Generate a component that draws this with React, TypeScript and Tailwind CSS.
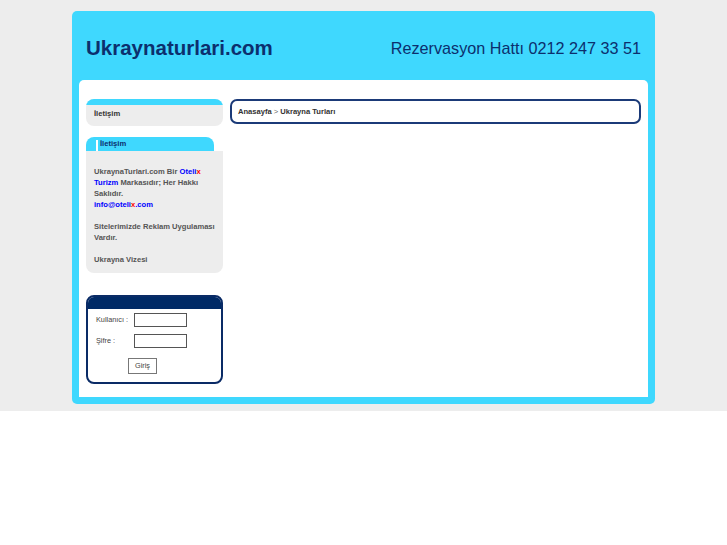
import React from "react";

const F = { fontFamily: '"Liberation Sans", Arial, sans-serif' };

export default function App() {
  return (
    <div style={F} className="w-full bg-white">
      <div className="bg-[#ededed] pt-[11px] pb-[7px]">
        <div className="mx-auto w-[583px] rounded-[5px] bg-[#3fd8fe] px-[7px] pb-[7px]">
          <div className="flex h-[69px] items-center justify-between pl-[7px] pr-[7px] pt-[6px]">
            <div className="text-[20.5px] font-bold leading-none text-[#0c2f6d]">Ukraynaturlari.com</div>
            <div className="text-[16.2px] leading-none text-[#0c2f6d]">Rezervasyon Hattı 0212 247 33 51</div>
          </div>
          <div className="flex h-[317px] gap-[7px] rounded-t-[5px] bg-white px-[7px] pt-[19px]">
            <div className="flex w-[137px] shrink-0 flex-col">
              {/* box 1 */}
              <div className="overflow-hidden rounded-[8px] bg-[#ededed]">
                <div className="h-[6px] bg-[#3fd8fe]"></div>
                <div className="h-[21px] pl-[8px] pt-[3px] text-[7.6px] font-bold leading-[11px] text-[#333]">İletişim</div>
              </div>
              {/* box 2 */}
              <div className="mt-[11px]">
                <div className="relative flex h-[14px] w-[128px] items-center rounded-t-[8px] bg-[#3fd8fe] pl-[14px] text-[7.6px] font-bold text-[#0c2f6d]">
                  <span className="absolute left-[10px] top-[3px] h-[11px] w-[2px] bg-white"></span>
                  İletişim
                </div>
                <div className="whitespace-nowrap rounded-b-[8px] bg-[#ededed] px-[8px] pb-[8px] pt-[15px] text-[7.6px] font-bold leading-[11px] text-[#555]">
                  <div>
                    UkraynaTurlari.com Bir <span className="text-[#0000ff]">Oteli</span>
                    <span className="text-[#ff0000]">x</span>
                  </div>
                  <div>
                    <span className="text-[#0000ff]">Turizm</span> Markasıdır; Her Hakkı
                  </div>
                  <div>Saklıdır.</div>
                  <div>
                    <span className="text-[#0000ff]">info@oteli</span>
                    <span className="text-[#ff0000]">x</span>
                    <span className="text-[#0000ff]">.com</span>
                  </div>
                  <div className="mt-[11px]">Sitelerimizde Reklam Uygulaması</div>
                  <div>Vardır.</div>
                  <div className="mt-[11px]">Ukrayna Vizesi</div>
                </div>
              </div>
              {/* login */}
              <div className="mt-[22px] overflow-hidden rounded-[8px] border-2 border-[#0a2b66] bg-white">
                <div className="h-[12px] bg-[#002a66]"></div>
                <div className="px-[8px] pb-[8px] pt-[4px] text-[7.3px] text-[#444]">
                  <div className="flex items-center">
                    <span className="w-[38px]">Kullanıcı :</span>
                    <span className="h-[14px] w-[53px] border border-[#555] bg-white"></span>
                  </div>
                  <div className="mt-[7px] flex items-center">
                    <span className="w-[38px]">Şifre :</span>
                    <span className="h-[14px] w-[53px] border border-[#555] bg-white"></span>
                  </div>
                  <div className="mt-[10px] pl-[32px]">
                    <span className="flex h-[16px] w-[29px] items-center justify-center border border-[#777] bg-white text-[#444]">Giriş</span>
                  </div>
                </div>
              </div>
            </div>
            <div className="flex-1">
              <div className="flex h-[25px] items-center rounded-[7px] border-2 border-[#1b3a78] pl-[6px] text-[7.6px] font-bold text-[#333]">
                Anasayfa <span className="mx-[2px] font-normal text-[#666]">&gt;</span> Ukrayna Turları
              </div>
            </div>
          </div>
        </div>
      </div>
    </div>
  );
}
